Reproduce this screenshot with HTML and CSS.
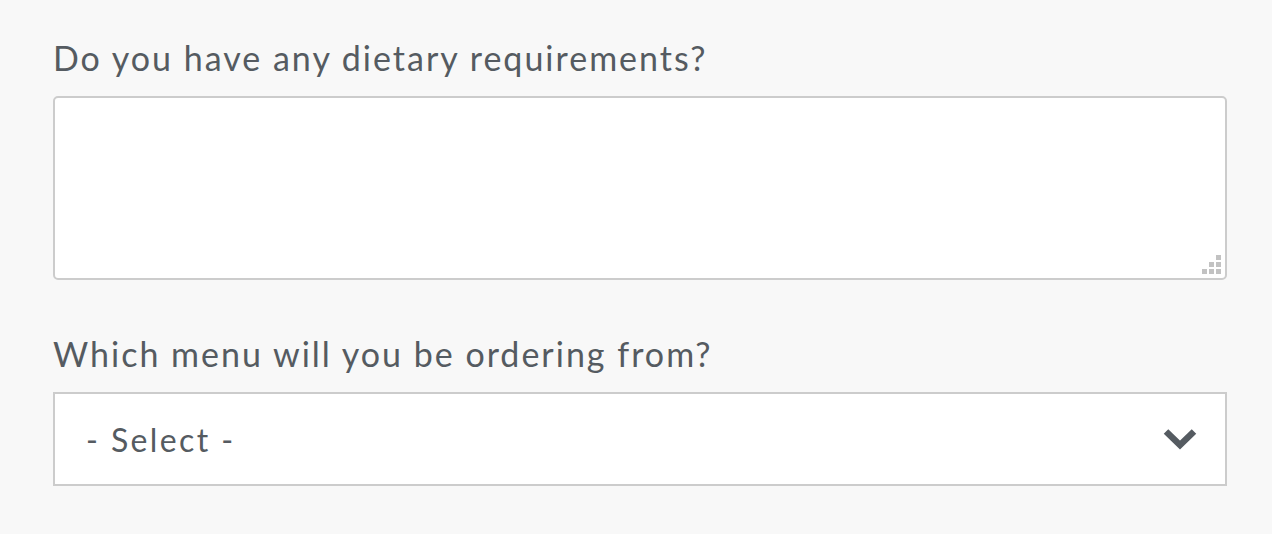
FILE: index.html
```html
<!DOCTYPE html>
<html>
<head>
<meta charset="utf-8">
<link rel="stylesheet" href="styles.css">
</head>
<body>
<form class="form">
  <div class="field">
    <label class="label" for="diet">Do you have any dietary requirements?</label>
    <div class="textarea-wrap">
      <textarea id="diet" class="textarea"></textarea>
      <svg class="grip" width="19" height="19" viewBox="0 0 19 19" aria-hidden="true">
        <rect x="14" y="0" width="5" height="5" fill="#c2c2c2"/>
        <rect x="7" y="7" width="5" height="5" fill="#c2c2c2"/>
        <rect x="14" y="7" width="5" height="5" fill="#c2c2c2"/>
        <rect x="0" y="14" width="5" height="5" fill="#c2c2c2"/>
        <rect x="7" y="14" width="5" height="5" fill="#c2c2c2"/>
        <rect x="14" y="14" width="5" height="5" fill="#c2c2c2"/>
      </svg>
    </div>
  </div>
  <div class="field">
    <label class="label" for="menu">Which menu will you be ordering from?</label>
    <div class="select">
      <span class="select-text">- Select -</span>
      <svg class="chevron" width="34" height="22" viewBox="0 0 34 22" aria-hidden="true">
        <path d="M3 3.5 L17 17 L31 3.5" fill="none" stroke="#555b61" stroke-width="6.5"/>
      </svg>
    </div>
  </div>
</form>
</body>
</html>
```
FILE: styles.css
```css
html, body {
  margin: 0;
  padding: 0;
  background: #f8f8f8;
}
body {
  font-family: Lato, "Open Sans", sans-serif;
  color: #555b61;
}
.form {
  padding: 36px 45px 0 53px;
  display: flex;
  flex-direction: column;
  gap: 52px;
}
.field {
  display: flex;
  flex-direction: column;
}
.label {
  font-size: 34px;
  line-height: 44px;
  letter-spacing: 2px;
  margin-bottom: 16px;
}
.textarea-wrap {
  position: relative;
  height: 184px;
}
.textarea {
  box-sizing: border-box;
  width: 100%;
  height: 100%;
  background: #fff;
  border: 2px solid #cccccc;
  border-radius: 5px;
  resize: none;
  margin: 0;
  display: block;
}
.grip {
  position: absolute;
  right: 6px;
  bottom: 6px;
}
.select {
  box-sizing: border-box;
  height: 94px;
  background: #fff;
  border: 2px solid #cccccc;
  display: flex;
  align-items: center;
  justify-content: space-between;
  padding: 0 28px 0 31px;
}
.select-text {
  font-size: 32px;
  letter-spacing: 2.4px;
}
.chevron {
  display: block;
}
```
